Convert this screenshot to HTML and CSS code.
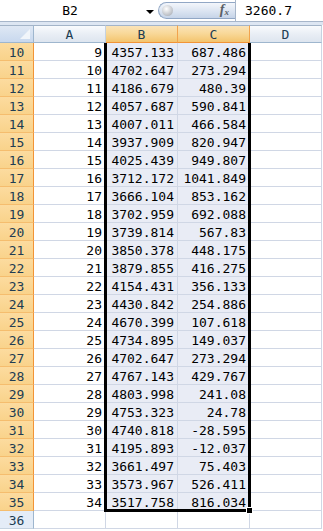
FILE: index.html
```html
<!DOCTYPE html>
<html lang="en">
<head>
    <meta charset="UTF-8">
    <title>Sheet1</title>
    <link rel="stylesheet" href="styles.css">
</head>
<body>

<div class="formula-bar">
    <div class="name-box">
        <span class="name-text">B2</span>
        <span class="name-arrow"></span>
    </div>
    <div class="fx-pill">
        <span class="knob"></span>
        <span class="fx"><i>f</i><sub>x</sub></span>
    </div>
    <div class="formula-input">3260.7</div>
</div>
<div class="bar-gap"></div>

<div class="sheet">
    <div class="row head-row">
        <div class="corner"><span class="corner-tri"></span></div>
        <div class="col-head">A</div>
        <div class="col-head is-sel">B</div>
        <div class="col-head is-sel">C</div>
        <div class="col-head">D</div>
    </div>

    <div class="row"><div class="row-head is-sel">10</div><div class="cell">9</div><div class="cell sel">4357.133</div><div class="cell sel">687.486</div><div class="cell"></div></div>
    <div class="row"><div class="row-head is-sel">11</div><div class="cell">10</div><div class="cell sel">4702.647</div><div class="cell sel">273.294</div><div class="cell"></div></div>
    <div class="row"><div class="row-head is-sel">12</div><div class="cell">11</div><div class="cell sel">4186.679</div><div class="cell sel">480.39</div><div class="cell"></div></div>
    <div class="row"><div class="row-head is-sel">13</div><div class="cell">12</div><div class="cell sel">4057.687</div><div class="cell sel">590.841</div><div class="cell"></div></div>
    <div class="row"><div class="row-head is-sel">14</div><div class="cell">13</div><div class="cell sel">4007.011</div><div class="cell sel">466.584</div><div class="cell"></div></div>
    <div class="row"><div class="row-head is-sel">15</div><div class="cell">14</div><div class="cell sel">3937.909</div><div class="cell sel">820.947</div><div class="cell"></div></div>
    <div class="row"><div class="row-head is-sel">16</div><div class="cell">15</div><div class="cell sel">4025.439</div><div class="cell sel">949.807</div><div class="cell"></div></div>
    <div class="row"><div class="row-head is-sel">17</div><div class="cell">16</div><div class="cell sel">3712.172</div><div class="cell sel">1041.849</div><div class="cell"></div></div>
    <div class="row"><div class="row-head is-sel">18</div><div class="cell">17</div><div class="cell sel">3666.104</div><div class="cell sel">853.162</div><div class="cell"></div></div>
    <div class="row"><div class="row-head is-sel">19</div><div class="cell">18</div><div class="cell sel">3702.959</div><div class="cell sel">692.088</div><div class="cell"></div></div>
    <div class="row"><div class="row-head is-sel">20</div><div class="cell">19</div><div class="cell sel">3739.814</div><div class="cell sel">567.83</div><div class="cell"></div></div>
    <div class="row"><div class="row-head is-sel">21</div><div class="cell">20</div><div class="cell sel">3850.378</div><div class="cell sel">448.175</div><div class="cell"></div></div>
    <div class="row"><div class="row-head is-sel">22</div><div class="cell">21</div><div class="cell sel">3879.855</div><div class="cell sel">416.275</div><div class="cell"></div></div>
    <div class="row"><div class="row-head is-sel">23</div><div class="cell">22</div><div class="cell sel">4154.431</div><div class="cell sel">356.133</div><div class="cell"></div></div>
    <div class="row"><div class="row-head is-sel">24</div><div class="cell">23</div><div class="cell sel">4430.842</div><div class="cell sel">254.886</div><div class="cell"></div></div>
    <div class="row"><div class="row-head is-sel">25</div><div class="cell">24</div><div class="cell sel">4670.399</div><div class="cell sel">107.618</div><div class="cell"></div></div>
    <div class="row"><div class="row-head is-sel">26</div><div class="cell">25</div><div class="cell sel">4734.895</div><div class="cell sel">149.037</div><div class="cell"></div></div>
    <div class="row"><div class="row-head is-sel">27</div><div class="cell">26</div><div class="cell sel">4702.647</div><div class="cell sel">273.294</div><div class="cell"></div></div>
    <div class="row"><div class="row-head is-sel">28</div><div class="cell">27</div><div class="cell sel">4767.143</div><div class="cell sel">429.767</div><div class="cell"></div></div>
    <div class="row"><div class="row-head is-sel">29</div><div class="cell">28</div><div class="cell sel">4803.998</div><div class="cell sel">241.08</div><div class="cell"></div></div>
    <div class="row"><div class="row-head is-sel">30</div><div class="cell">29</div><div class="cell sel">4753.323</div><div class="cell sel">24.78</div><div class="cell"></div></div>
    <div class="row"><div class="row-head is-sel">31</div><div class="cell">30</div><div class="cell sel">4740.818</div><div class="cell sel">-28.595</div><div class="cell"></div></div>
    <div class="row"><div class="row-head is-sel">32</div><div class="cell">31</div><div class="cell sel">4195.893</div><div class="cell sel">-12.037</div><div class="cell"></div></div>
    <div class="row"><div class="row-head is-sel">33</div><div class="cell">32</div><div class="cell sel">3661.497</div><div class="cell sel">75.403</div><div class="cell"></div></div>
    <div class="row"><div class="row-head is-sel">34</div><div class="cell">33</div><div class="cell sel">3573.967</div><div class="cell sel">526.411</div><div class="cell"></div></div>
    <div class="row"><div class="row-head is-sel">35</div><div class="cell">34</div><div class="cell sel">3517.758</div><div class="cell sel">816.034</div><div class="cell"></div></div>
    <div class="row"><div class="row-head">36</div><div class="cell"></div><div class="cell"></div><div class="cell"></div><div class="cell"></div></div>

    <!-- selection outline over B:C, top edge is above the visible rows -->
    <div class="selection"><span class="fill-handle"></span></div>
</div>

</body>
</html>
```

FILE: styles.css
```css
body {
    margin: 0;
    width: 323px;
    height: 531px;
    overflow: hidden;
    background: #fff;
    font-family: 'DejaVu Sans Mono', 'Liberation Mono', monospace;
    font-size: 13px;
    color: #000;
}

/* Formula bar */
.formula-bar {
    display: flex;
    height: 22px;
    box-sizing: border-box;
    border-bottom: 1px solid #a7b6ca;
    background: #fff;
}

.name-box {
    width: 158px;
    display: flex;
    align-items: center;
}

.name-text {
    width: 140px;
    text-align: center;
    line-height: 21px;
}

.name-arrow {
    width: 0;
    height: 0;
    margin-left: 6px;
    margin-top: 2px;
    border-left: 4px solid transparent;
    border-right: 4px solid transparent;
    border-top: 4px solid #000;
}

.fx-pill {
    width: 77px;
    height: 17px;
    margin-top: 2px;
    box-sizing: border-box;
    border: 1px solid #91a7c5;
    border-right: none;
    border-radius: 9px 0 0 9px;
    background: linear-gradient(#f3f6fb, #dbe4f1 55%, #c6d4e8);
    display: flex;
    align-items: center;
    justify-content: space-between;
    padding: 0 6px 0 3px;
}

.knob {
    width: 11px;
    height: 11px;
    border-radius: 50%;
    background: radial-gradient(circle at 40% 35%, #ffffff, #c9ccd1 55%, #9da2aa);
}

.fx {
    font-family: 'Liberation Serif', serif;
    font-weight: bold;
    font-size: 14px;
    color: #5b5f66;
    line-height: 14px;
}

.fx sub {
    font-size: 9px;
    vertical-align: -1px;
    font-style: italic;
}

.formula-input {
    flex: 1;
    border-left: 1px solid #a7b6ca;
    padding-left: 9px;
    line-height: 22px;
}

.bar-gap {
    height: 3px;
    background: #dde6f2;
}

/* Grid */
.sheet {
    position: relative;
}

.row {
    display: grid;
    grid-template-columns: 34px 72px 72px 72px 72px;
    height: 18px;
}

.row > div {
    box-sizing: border-box;
    border-right: 1px solid #d0d7e5;
    border-bottom: 1px solid #d0d7e5;
    line-height: 19px;
    white-space: nowrap;
    overflow: hidden;
}

.cell {
    text-align: right;
    padding-right: 3px;
}

.cell.sel {
    background: #e9ecf5;
}

.head-row > div {
    border-top: 1px solid #a3b4c8;
    border-bottom: 1px solid #9eb6ce;
    line-height: 17px;
}

.corner {
    position: relative;
    background: linear-gradient(#dfe8f4, #c8d8ee);
    border-right-color: #9eb6ce !important;
}

.corner-tri {
    position: absolute;
    right: 3px;
    bottom: 3px;
    width: 0;
    height: 0;
    border-left: 10px solid transparent;
    border-bottom: 10px solid #f1f5fa;
}

.col-head {
    text-align: center;
    color: #213c52;
    background: linear-gradient(#f9fbfd, #e9eef5 50%, #dde5ef);
    border-right-color: #c5d2e0 !important;
}

.col-head.is-sel {
    background: linear-gradient(#fae3b8, #f8d796 50%, #f3c46d);
    border-right-color: #f2a34d !important;
    border-bottom-color: #f29436 !important;
}

.row-head {
    text-align: center;
    color: #213c52;
    background: #e4ecf7;
    border-right-color: #9eb6ce !important;
    border-bottom-color: #c5d2e0 !important;
}

.row-head.is-sel {
    background: linear-gradient(#fcdb9f, #f9d38b);
    border-right-color: #f29436 !important;
    border-bottom-color: #f5bd6e !important;
}

/* Selection outline */
.selection {
    position: absolute;
    left: 104px;
    top: 18px;
    width: 147px;
    height: 469px;
    box-sizing: border-box;
    border: 3px solid #000;
    border-top: none;
}

.fill-handle {
    position: absolute;
    right: -5px;
    bottom: -5px;
    width: 5px;
    height: 5px;
    background: #000;
    border: 1px solid #fff;
}
```
